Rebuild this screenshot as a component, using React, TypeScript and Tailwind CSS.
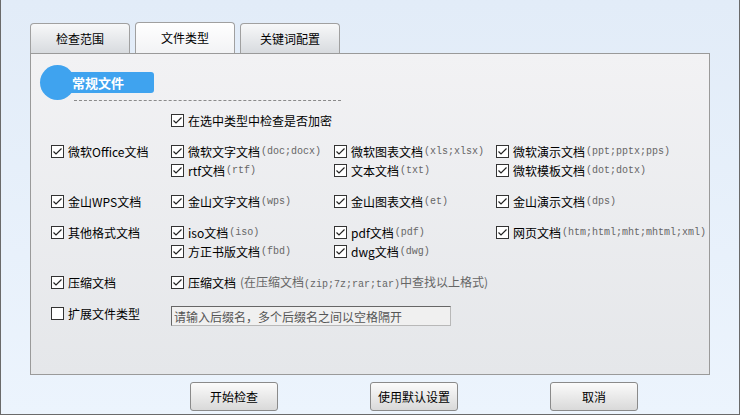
import React from 'react';

const font = "font-['SimSun','Noto_Sans_CJK_SC',sans-serif]";

const Box: React.FC<{ checked?: boolean }> = ({ checked = true }) => (
  <svg width="13" height="13" viewBox="0 0 13 13" className="shrink-0">
    <rect x="0.5" y="0.5" width="12" height="12" fill="#fff" stroke="#333" />
    {checked && <polyline points="2.5,6.5 5,9 10.5,3.5" fill="none" stroke="#222" strokeWidth="1.2" />}
  </svg>
);

const Item: React.FC<{ label: string; ext?: string; checked?: boolean }> = ({ label, ext, checked }) => (
  <div className="flex items-center h-[19px] gap-[4px] whitespace-nowrap">
    <Box checked={checked} />
    <span className="text-[12px] text-black">{label}</span>
    {ext && <span className="font-['Liberation_Mono',monospace] text-[10px] text-[#666] -ml-[3px]">{ext}</span>}
  </div>
);

type Cell = { label: string; ext?: string } | null;

const Group: React.FC<{ title: string; rows: Cell[][] }> = ({ title, rows }) => (
  <div className="grid grid-cols-[120px_163px_162px_1fr]">
    <div className="row-span-2"><Item label={title} /></div>
    {rows.map((r, i) =>
      r.map((c, j) => (
        <div key={`${i}-${j}`} className={j === 0 ? 'col-start-2' : ''}>
          {c && <Item label={c.label} ext={c.ext} />}
        </div>
      ))
    )}
  </div>
);

const Tab: React.FC<{ label: string; active?: boolean }> = ({ label, active }) => (
  <div
    className={
      active
        ? 'w-[100px] h-[31px] -mb-px rounded-t-[4px] border border-b-0 border-[#a0a0a0] bg-gradient-to-b from-white to-[#f2f3f5] flex items-center justify-center text-[12px] text-black z-10'
        : 'w-[100px] h-[30px] mt-[1px] rounded-t-[4px] border border-b-0 border-[#a0a0a0] bg-gradient-to-b from-[#f7f8f9] to-[#d8dbdf] flex items-center justify-center text-[12px] text-black'
    }
  >
    {label}
  </div>
);

const Btn: React.FC<{ label: string }> = ({ label }) => (
  <button className="w-[88px] h-[29px] rounded-[3px] border border-[#8a8a8a] bg-gradient-to-b from-[#fbfbfb] to-[#d9d9d9] text-[12px] text-black">
    {label}
  </button>
);

export default function App() {
  return (
    <div className={`${font} w-[740px] h-[415px] border-l border-r border-b border-[#6a6a6a] bg-gradient-to-b from-[#e2ecf8] to-[#ecf4fd] flex flex-col`}>
      <div className="flex gap-[5px] pl-[29px] pt-[22px]">
        <Tab label="检查范围" />
        <Tab label="文件类型" active />
        <Tab label="关键词配置" />
      </div>
      <div className="ml-[29px] w-[680px] h-[322px] border border-[#9a9a9a] bg-gradient-to-b from-[#f2f2f4] to-[#e5e7ea] pt-[11px] pl-[9px]">
        <div className="flex h-[36px]">
          <div className="w-[35px] h-[35px] rounded-full bg-[#3fa3ef] shrink-0" />
          <div className="flex flex-col -ml-[5px]">
            <div className="mt-[7px] h-[21px] w-[84px] rounded-r-[3px] bg-[#3fa3ef] flex items-center pl-[2px] text-white text-[13px] font-bold">
              常规文件
            </div>
            <div className="mt-auto ml-[4px] w-[267px] border-t border-dashed border-[#8a8a8a]" />
          </div>
        </div>
        <div className="pl-[11px] mt-[10px] flex flex-col gap-[12px]">
          <div className="pl-[120px]"><Item label="在选中类型中检查是否加密" /></div>
          <Group
            title="微软Office文档"
            rows={[
              [{ label: '微软文字文档', ext: '(doc;docx)' }, { label: '微软图表文档', ext: '(xls;xlsx)' }, { label: '微软演示文档', ext: '(ppt;pptx;pps)' }],
              [{ label: 'rtf文档', ext: '(rtf)' }, { label: '文本文档', ext: '(txt)' }, { label: '微软模板文档', ext: '(dot;dotx)' }],
            ]}
          />
          <Group
            title="金山WPS文档"
            rows={[[{ label: '金山文字文档', ext: '(wps)' }, { label: '金山图表文档', ext: '(et)' }, { label: '金山演示文档', ext: '(dps)' }]]}
          />
          <Group
            title="其他格式文档"
            rows={[
              [{ label: 'iso文档', ext: '(iso)' }, { label: 'pdf文档', ext: '(pdf)' }, { label: '网页文档', ext: '(htm;html;mht;mhtml;xml)' }],
              [{ label: '方正书版文档', ext: '(fbd)' }, { label: 'dwg文档', ext: '(dwg)' }, null],
            ]}
          />
          <div className="grid grid-cols-[120px_1fr]">
            <Item label="压缩文档" />
            <div className="flex items-center h-[19px] gap-[4px] whitespace-nowrap">
              <Box />
              <span className="text-[12px]">压缩文档</span>
              <span className="text-[12px] text-[#666]">
                (在压缩文档<span className="font-['Liberation_Mono',monospace] text-[10px]">(zip;7z;rar;tar)</span>中查找以上格式)
              </span>
            </div>
          </div>
          <div className="grid grid-cols-[120px_1fr]">
            <Item label="扩展文件类型" checked={false} />
            <div className="pt-[2px]">
              <input
                className="block w-[280px] h-[20px] border border-[#b8b8b8] border-l-[#666] border-t-[#666] bg-[#f0f0f0] px-[2px] text-[12px] outline-none placeholder:text-[#555]"
                placeholder="请输入后缀名，多个后缀名之间以空格隔开"
              />
            </div>
          </div>
        </div>
      </div>
      <div className="flex pl-[189px] gap-[92px] mt-[7px]">
        <Btn label="开始检查" />
        <Btn label="使用默认设置" />
        <Btn label="取消" />
      </div>
    </div>
  );
}
